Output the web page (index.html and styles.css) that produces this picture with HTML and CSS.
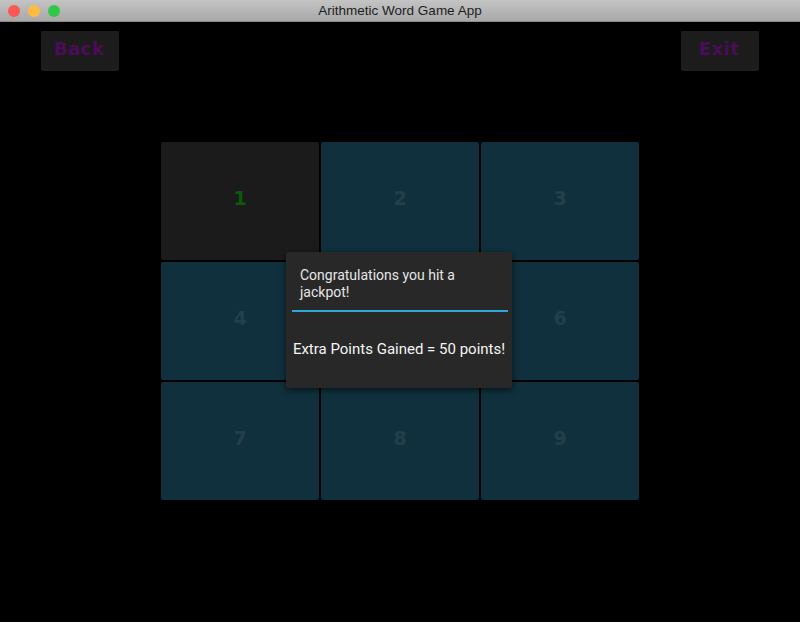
FILE: index.html
```html
<!DOCTYPE html>
<html>
<head>
<meta charset="utf-8">
<link rel="stylesheet" href="styles.css">
</head>
<body>
<div class="window">
  <div class="titlebar">
    <div class="lights">
      <span class="light red"></span>
      <span class="light yellow"></span>
      <span class="light green"></span>
    </div>
    <div class="title">Arithmetic Word Game App</div>
  </div>
  <div class="content">
    <div class="toolbar">
      <button class="btn">Back</button>
      <button class="btn">Exit</button>
    </div>
    <div class="board">
      <div class="grid">
        <div class="tile active">1</div>
        <div class="tile">2</div>
        <div class="tile">3</div>
        <div class="tile">4</div>
        <div class="tile">5</div>
        <div class="tile">6</div>
        <div class="tile">7</div>
        <div class="tile">8</div>
        <div class="tile">9</div>
      </div>
      <div class="dialog">
        <div class="dialog-title">Congratulations you hit a jackpot!</div>
        <div class="dialog-rule"></div>
        <div class="dialog-body">Extra Points Gained = 50 points!</div>
      </div>
    </div>
  </div>
</div>
</body>
</html>
```
FILE: styles.css
```css
html, body {
  margin: 0;
  padding: 0;
  background: #000;
}
.window {
  width: 800px;
  height: 622px;
  background: #000;
  display: flex;
  flex-direction: column;
  overflow: hidden;
}
.titlebar {
  height: 22px;
  flex: none;
  background: linear-gradient(#c4c4c4, #a8a8a8);
  border-bottom: 1px solid #8a8a8a;
  box-sizing: border-box;
  position: relative;
  display: flex;
  align-items: center;
  justify-content: center;
}
.lights {
  position: absolute;
  left: 8px;
  top: 5px;
  display: flex;
  gap: 8px;
}
.light {
  width: 12px;
  height: 12px;
  border-radius: 50%;
  display: block;
}
.red { background: #fc5753; }
.yellow { background: #fdbc40; }
.green { background: #33c748; }
.title {
  font-family: "Liberation Sans", Arial, sans-serif;
  font-size: 13.5px;
  color: #1e1e1e;
}
.content {
  flex: 1;
  display: flex;
  flex-direction: column;
}
.toolbar {
  display: flex;
  justify-content: space-between;
  padding: 9px 41px 0 41px;
}
.btn {
  width: 78px;
  height: 40px;
  background: #1c1c1c;
  border: none;
  border-radius: 2px;
  color: #4b0d57;
  font-family: "DejaVu Sans", Verdana, sans-serif;
  font-weight: bold;
  font-size: 18px;
  letter-spacing: 0.5px;
  padding: 0 2px 6px 0;
  margin: 0;
}
.board {
  position: relative;
  margin: 71px auto 0 auto;
  width: 478px;
}
.grid {
  display: grid;
  grid-template-columns: repeat(3, 158px);
  grid-template-rows: repeat(3, 118px);
  gap: 2px;
}
.tile {
  background: #10303d;
  border-radius: 2px;
  display: flex;
  align-items: center;
  justify-content: center;
  padding-bottom: 6px;
  box-sizing: border-box;
  font-family: "DejaVu Sans", Verdana, sans-serif;
  font-weight: bold;
  font-size: 19px;
  color: #243f49;
}
.tile.active {
  background: #1b1b1b;
  color: #0b5a0b;
}
.dialog {
  position: absolute;
  left: 125px;
  top: 110px;
  width: 226px;
  height: 136px;
  background: #282828;
  border-radius: 2px;
  box-shadow: 0 2px 6px rgba(0,0,0,0.6);
  display: flex;
  flex-direction: column;
  box-sizing: border-box;
}
.dialog-title {
  font-family: Roboto, "Noto Sans", sans-serif;
  font-size: 14px;
  line-height: 17px;
  color: #e6e6e6;
  padding: 15px 14px 0 14px;
}
.dialog-rule {
  height: 2px;
  background: #2fa7d6;
  margin: 9px 4px 0 6px;
}
.dialog-body {
  flex: 1;
  display: flex;
  align-items: center;
  justify-content: center;
  font-family: Roboto, "Noto Sans", sans-serif;
  font-size: 15px;
  color: #f4f4f4;
  padding-bottom: 2px;
}
```
